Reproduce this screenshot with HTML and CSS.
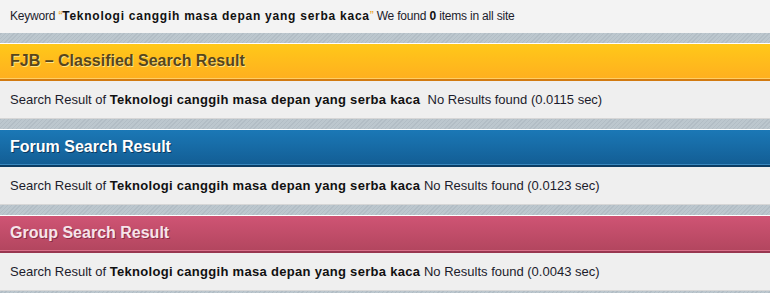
FILE: index.html
```html
<!DOCTYPE html>
<html>
<head>
<meta charset="utf-8">
<link rel="stylesheet" href="styles.css">
</head>
<body>
<div class="page">
  <div class="summary">Keyword <span class="q">“</span><b>Teknologi canggih masa depan yang serba kaca</b><span class="q">”</span> We found <b class="num">0</b> items in all site</div>

  <section class="block">
    <h3 class="head fjb">FJB – Classified Search Result</h3>
    <div class="body">Search Result of <b>Teknologi canggih masa depan yang serba kaca</b>&nbsp; No Results found (0.0115 sec)</div>
  </section>

  <section class="block">
    <h3 class="head forum">Forum Search Result</h3>
    <div class="body">Search Result of <b>Teknologi canggih masa depan yang serba kaca</b> No Results found (0.0123 sec)</div>
  </section>

  <section class="block">
    <h3 class="head group">Group Search Result</h3>
    <div class="body">Search Result of <b>Teknologi canggih masa depan yang serba kaca</b> No Results found (0.0043 sec)</div>
  </section>
</div>
</body>
</html>
```
FILE: styles.css
```css
html, body {
  margin: 0;
  padding: 0;
  background: #ffffff;
}
.page {
  width: 770px;
  height: 293px;
  overflow: hidden;
  font-family: "Liberation Sans", Arial, sans-serif;
  font-size: 12px;
  color: #1c1c2c;
  background: repeating-linear-gradient(135deg, #b2bdc5 0px, #b2bdc5 1px, #bcc7ce 1px, #bcc7ce 3px);
}
.summary {
  height: 33px;
  line-height: 33px;
  padding-left: 10px;
  background: #f3f3f3;
  letter-spacing: -0.2px;
}
.summary b {
  color: #111;
  letter-spacing: 0.75px;
}
.summary b.num {
  letter-spacing: 0;
}
.q {
  color: #e9a21c;
}
.block {
  margin-top: 10px;
  border-top: 1px solid #ffffff;
}
.head {
  margin: 0 0 2px 0;
  height: 34px;
  line-height: 34px;
  padding-left: 10px;
  font-size: 16px;
  font-weight: bold;
}
.fjb {
  color: #56461c;
  text-shadow: 1px 1px 0 #ffe48a;
  background: linear-gradient(#ffc819, #ffb01f);
  border-bottom: 1px solid #ffcf66;
  box-shadow: 0 2px 0 #d27a10;
}
.forum {
  color: #ffffff;
  text-shadow: 1px 1px 0 #0c3a60;
  background: linear-gradient(#1b78b6, #135e95);
  border-bottom: 1px solid #3a88bf;
  box-shadow: 0 2px 0 #0c3d64;
}
.group {
  color: #f6e4ea;
  text-shadow: 1px 1px 0 #8a2c45;
  background: linear-gradient(#cf5474, #b3465f);
  border-bottom: 1px solid #d9718a;
  box-shadow: 0 2px 0 #983650;
}
.body {
  height: 37px;
  line-height: 37px;
  padding-left: 10px;
  font-size: 13px;
  background: #efefef;
  border-bottom: 1px solid #d6d6d6;
}
.body b {
  color: #111;
  letter-spacing: 0.3px;
}
```
